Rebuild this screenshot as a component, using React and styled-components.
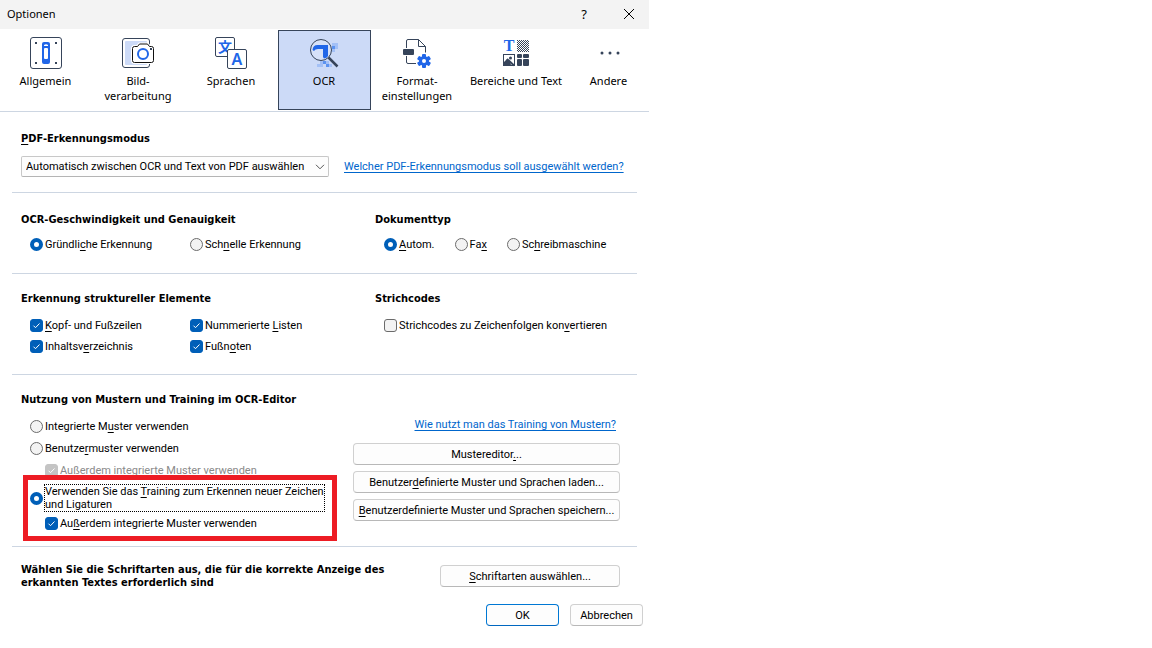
import React, { useState } from "react";
import styled, { createGlobalStyle } from "styled-components";

const GlobalStyle = createGlobalStyle`
  * {
    box-sizing: border-box;
  }

  body {
    margin: 0;
    background: #fff;
    color: #000;
    font-family: Roboto, sans-serif;
    font-size: 11px;
    line-height: 15px;
  }
`;

const Dialog = styled.main`
  width: 100%;
  max-width: 649px;
`;

const TitleBar = styled.header`
  display: flex;
  align-items: center;
  height: 29px;
  padding: 0 6px 2px 7px;
  background: #f3f3f3;
  font-family: "Noto Sans", sans-serif;

  h1 {
    flex: 1;
    margin: 0;
    font-size: 11px;
    font-weight: 400;
  }
`;

const TitleButton = styled.button`
  display: flex;
  align-items: center;
  justify-content: center;
  width: 28px;
  height: 26px;
  margin-left: 17px;
  padding: 0;
  border: 0;
  background: none;
  color: #000;
  font-family: inherit;
  font-size: 13px;
`;

const Toolbar = styled.nav`
  display: grid;
  grid-template-columns: 92px repeat(4, 93px) 105px 1fr;
  padding: 1px 0;
  border-bottom: 1px solid #cdd6e2;
`;

const Tab = styled.button`
  display: flex;
  flex-direction: column;
  align-items: center;
  gap: 4px;
  height: 80px;
  padding: 6px 1px 0 0;
  border: 1px solid ${(props) => (props.$active ? "#36445a" : "transparent")};
  background: ${(props) => (props.$active ? "#ccdaf7" : "none")};
  color: #000;
  font-family: "Noto Sans", sans-serif;
  font-size: 11px;
  line-height: 15px;
  white-space: pre-line;
`;

const Section = styled.section`
  display: grid;
  grid-template-columns: ${(props) => props.$columns || "354px 1fr"};
  align-items: ${(props) => (props.$last ? "center" : "start")};
  margin: 0 12px;
  padding: ${(props) => props.$pad};
  border-bottom: ${(props) => (props.$last ? "0" : "1px solid #cdd6e2")};
`;

const Heading = styled.h2`
  margin: 0 0 ${(props) => props.$gap || "10px"};
  font-family: "DejaVu Sans Condensed", "DejaVu Sans", sans-serif;
  font-size: 11px;
  font-weight: 700;
  line-height: ${(props) => props.$line || "14px"};
`;

const Options = styled.div`
  display: grid;
  grid-template-columns: 160px 1fr;
  gap: 6px 0;
  padding-left: 9px;
`;

const OptionRow = styled.div`
  display: flex;
  gap: 20px;
  padding-left: 9px;
`;

const OptionLabel = styled.label`
  display: flex;
  align-items: center;
  gap: 2px;
  color: ${(props) => (props.$disabled ? "#8a8a8a" : "#000")};
  white-space: nowrap;
`;

const RadioInput = styled.input`
  appearance: none;
  flex: none;
  width: 13px;
  height: 13px;
  margin: 0;
  border: 1px solid #6b6b6b;
  border-radius: 50%;
  background: #f3f3f3;

  &:checked {
    border: 4px solid #005fb8;
    background: #fff;
  }
`;

const CheckBox = styled.span`
  display: grid;
  flex: none;
  width: 13px;
  height: 13px;

  input,
  svg {
    grid-area: 1 / 1;
  }

  input {
    appearance: none;
    width: 13px;
    height: 13px;
    margin: 0;
    border: 1px solid #6b6b6b;
    border-radius: 3px;
    background: #f3f3f3;
  }

  input:checked {
    border-color: #005fb8;
    background: #005fb8;
  }

  input:disabled {
    border-color: #c4c4c4;
    background: #c4c4c4;
  }

  svg {
    pointer-events: none;
  }
`;

const SelectBox = styled.div`
  display: grid;
  align-items: center;
  width: 308px;

  select,
  svg {
    grid-area: 1 / 1;
  }

  select {
    appearance: none;
    width: 100%;
    height: 21px;
    padding: 0 20px 0 4px;
    border: 1px solid #c8c8c8;
    border-bottom-color: #b4b4b4;
    border-radius: 2px;
    background: #fdfdfd;
    color: #000;
    font: inherit;
  }

  svg {
    justify-self: end;
    margin-right: 4px;
    pointer-events: none;
  }
`;

const ModeRow = styled.div`
  display: flex;
  align-items: center;
  gap: 15px;
`;

const Link = styled.a`
  color: #0066cc;
  text-decoration: underline;
  text-underline-offset: 2px;
  white-space: nowrap;
`;

const Button = styled.button`
  width: ${(props) => props.$width || "100%"};
  height: 22px;
  padding: 0;
  border: 1px solid ${(props) => (props.$primary ? "#0078d4" : "#d0d0d0")};
  border-bottom-color: ${(props) => (props.$primary ? "#0067c0" : "#b8b8b8")};
  border-radius: 4px;
  background: #fdfdfd;
  color: #000;
  font: inherit;
  white-space: nowrap;
`;

const Patterns = styled.div`
  display: flex;
  flex-direction: column;
  gap: 7px;
  padding-left: 9px;
`;

const Nested = styled.div`
  padding-left: 15px;
`;

const Training = styled.div`
  position: relative;
  display: flex;
  flex-direction: column;
  gap: 5px;
`;

const TrainingLabel = styled(OptionLabel)`
  line-height: 13px;

  span {
    min-width: 278px;
    outline: 1px dotted #000;
  }
`;

/* marker frame laid over the training options */
const Marker = styled.div`
  position: absolute;
  top: -10px;
  right: -5px;
  bottom: -10px;
  left: -7px;
  border: 5px solid #ed1c24;
  pointer-events: none;
`;

const PatternActions = styled.div`
  display: flex;
  flex-direction: column;
  align-items: flex-end;
  gap: 6px;
  padding: 24px 17px 0 0;

  a {
    margin: 0 4px 5px 0;
  }
`;

const Footer = styled.footer`
  display: flex;
  justify-content: flex-end;
  gap: 11px;
  padding: 15px 6px 0 0;
`;

const Key = styled.u`
  text-underline-offset: 2px;
`;

const Check = () => (
  <svg width="13" height="13" viewBox="0 0 13 13" fill="none" stroke="#fff" aria-hidden="true">
    <path d="M3.5 6.7l2 2 4-4.2" />
  </svg>
);

const Checkbox = ({ children, initial = true, disabled }) => {
  const [checked, setChecked] = useState(initial);
  return (
    <OptionLabel $disabled={disabled}>
      <CheckBox>
        <input
          type="checkbox"
          checked={checked}
          disabled={disabled}
          onChange={() => setChecked(!checked)}
        />
        {checked && <Check />}
      </CheckBox>
      <span>{children}</span>
    </OptionLabel>
  );
};

const Radio = ({ children, name, initial, as: Label = OptionLabel }) => (
  <Label>
    <RadioInput type="radio" name={name} defaultChecked={initial} />
    <span>{children}</span>
  </Label>
);

const Icon = ({ children }) => (
  <svg width="32" height="32" viewBox="0 0 32 32" fill="none" aria-hidden="true">
    {children}
  </svg>
);

const DARK = "#36445a";
const BLUE = "#2066e8";

const GeneralIcon = () => (
  <Icon>
    <rect x="0.5" y="0.5" width="31" height="31" rx="2.5" stroke={DARK} />
    <g fill={DARK}>
      <rect x="5" y="5" width="2" height="2" />
      <rect x="25" y="5" width="2" height="2" />
      <rect x="5" y="25" width="2" height="2" />
      <rect x="25" y="25" width="2" height="2" />
    </g>
    <rect x="12" y="5" width="8" height="22" rx="2" fill={BLUE} />
    <path d="M14 8q2-1.5 4 0v1h-4z" fill="#fff" />
    <rect x="14" y="11" width="4" height="11" rx="1" fill="#fff" />
  </Icon>
);

const ImageIcon = () => (
  <Icon>
    <rect x="0.5" y="1.5" width="27" height="29" rx="2.5" stroke={DARK} />
    <rect x="3" y="4" width="22" height="24" rx="1" fill="#ccdaf7" />
    <path
      d="M12.5 9.5h3l2-2.5h8l2 2.5h2q2 0 2 2v12q0 2-2 2h-17q-2 0-2-2v-12q0-2 2-2z"
      fill="#fff"
      stroke="#fff"
      strokeWidth="3"
    />
    <path
      d="M12.5 9.5h3l2-2.5h8l2 2.5h2q2 0 2 2v12q0 2-2 2h-17q-2 0-2-2v-12q0-2 2-2z"
      fill="#fff"
      stroke="#111"
    />
    <circle cx="21" cy="17" r="5" stroke={BLUE} strokeWidth="2" />
    <rect x="28" y="11" width="2" height="2" fill={DARK} />
  </Icon>
);

const LanguageIcon = () => (
  <Icon>
    <rect x="0.5" y="0.5" width="19" height="19" rx="1.5" stroke={DARK} />
    <text
      x="10"
      y="15"
      textAnchor="middle"
      fontFamily="'Noto Sans CJK JP', sans-serif"
      fontSize="14"
      fontWeight="700"
      fill={BLUE}
    >
      文
    </text>
    <rect x="12.5" y="12.5" width="19" height="19" rx="1.5" fill="#fff" stroke={DARK} />
    <text
      x="22"
      y="28"
      textAnchor="middle"
      fontFamily="'Noto Sans', sans-serif"
      fontSize="16"
      fontWeight="600"
      fill={BLUE}
    >
      A
    </text>
  </Icon>
);

const OcrIcon = () => (
  <Icon>
    <g fill="#5c93f0">
      <rect x="24" y="9" width="3" height="3" />
      <rect x="15" y="24" width="3" height="3" />
      <rect x="18" y="27" width="3" height="3" />
    </g>
    <g fill="#a3c0f6">
      <rect x="24" y="6" width="6" height="3" />
      <rect x="27" y="9" width="3" height="3" />
      <rect x="24" y="12" width="3" height="3" />
      <rect x="12" y="24" width="3" height="3" />
      <rect x="9" y="27" width="6" height="3" />
      <rect x="18" y="24" width="3" height="3" />
      <rect x="21" y="27" width="3" height="3" />
    </g>
    <circle cx="13" cy="13" r="10.5" fill="#d6e1f8" />
    <path d="M4.5 13q.5-5 5-5H20v11q-1 2-4 2.5-1.500-.5-1-3.500v-6h-5q-3 0-4 2z" fill={BLUE} />
    <circle cx="13" cy="13" r="10.500" stroke={DARK} />
    <path d="M20.500 20.500l9 9" stroke={DARK} strokeWidth="2.500" />
  </Icon>
);

const FormatIcon = () => (
  <Icon>
    <path d="M5.500 11V4q0-1.500 1.500-1.500h10.500l7 7v6M5.500 19v6q0 1.500 1.500 1.500h8" stroke={DARK} />
    <path d="M17.500 2.500v7h7" stroke={DARK} />
    <rect x="2" y="12" width="11" height="6" rx="1" fill={DARK} />
    <g transform="translate(23 24)">
      <g fill={BLUE}>
        <rect x="-2" y="-7" width="4" height="14" rx="1" />
        <rect x="-2" y="-7" width="4" height="14" rx="1" transform="rotate(60)" />
        <rect x="-2" y="-7" width="4" height="14" rx="1" transform="rotate(120)" />
        <circle r="5" />
      </g>
      <circle r="2" fill="#fff" />
    </g>
  </Icon>
);

const AreasIcon = () => (
  <Icon>
    <defs>
      <pattern id="checker" width="2" height="2" patternUnits="userSpaceOnUse">
        <rect width="1" height="1" fill={DARK} />
        <rect x="1" y="1" width="1" height="1" fill={DARK} />
      </pattern>
    </defs>
    <text
      x="9"
      y="14"
      textAnchor="middle"
      fontFamily="'Liberation Serif', serif"
      fontSize="16"
      fontWeight="700"
      fill={BLUE}
    >
      T
    </text>
    <rect x="17" y="3" width="12" height="12" fill="url(#checker)" />
    <rect x="3.5" y="17.5" width="11" height="11" stroke={DARK} />
    <path d="M4 28v-3l3-3 3 3 1 3z" fill={DARK} />
    <path d="M7 22l7 6.5" stroke={DARK} strokeWidth="2" />
    <circle cx="10.5" cy="21" r="1.5" fill={DARK} />
    <g fill={DARK}>
      <rect x="17" y="17" width="5" height="4" rx="1" />
      <rect x="23" y="17" width="6" height="4" rx="1" />
      <rect x="17" y="22" width="5" height="7" rx="1" />
      <rect x="23" y="22" width="6" height="7" rx="1" />
    </g>
  </Icon>
);

const MoreIcon = () => (
  <Icon>
    <g fill={DARK}>
      <circle cx="9" cy="16" r="1.5" />
      <circle cx="17" cy="16" r="1.5" />
      <circle cx="25" cy="16" r="1.5" />
    </g>
  </Icon>
);

const tabs = [
  { label: "Allgemein", icon: GeneralIcon },
  { label: "Bild-\nverarbeitung", icon: ImageIcon },
  { label: "Sprachen", icon: LanguageIcon },
  { label: "OCR", icon: OcrIcon },
  { label: "Format-\neinstellungen", icon: FormatIcon },
  { label: "Bereiche und Text", icon: AreasIcon },
  { label: "Andere", icon: MoreIcon },
];

const App = () => {
  const [active, setActive] = useState("OCR");

  return (
    <>
      <GlobalStyle />
      <Dialog>
        <TitleBar>
          <h1>Optionen</h1>
          <TitleButton aria-label="Hilfe">?</TitleButton>
          <TitleButton aria-label="Schließen">
            <svg width="12" height="12" viewBox="0 0 12 12" stroke="#000" aria-hidden="true">
              <path d="M1 1l10 10M11 1L1 11" />
            </svg>
          </TitleButton>
        </TitleBar>

        <Toolbar>
          {tabs.map(({ label, icon: TabIcon }) => (
            <Tab key={label} $active={active === label} onClick={() => setActive(label)}>
              <TabIcon />
              <span>{label}</span>
            </Tab>
          ))}
        </Toolbar>

        <Section $columns="1fr" $pad="20px 9px 15px">
          <Heading>
            <label htmlFor="mode">
              <Key>P</Key>DF-Erkennungsmodus
            </label>
          </Heading>
          <ModeRow>
            <SelectBox>
              <select id="mode">
                <option>Automatisch zwischen OCR und Text von PDF auswählen</option>
              </select>
              <svg width="10" height="6" viewBox="0 0 10 6" fill="none" stroke="#555" aria-hidden="true">
                <path d="M1 .8l4 4 4-4" />
              </svg>
            </SelectBox>
            <Link href="#mode">Welcher PDF-Erkennungsmodus soll ausgewählt werden?</Link>
          </ModeRow>
        </Section>

        <Section $pad="20px 9px 21px">
          <div>
            <Heading>OCR-Geschwindigkeit und Genauigkeit</Heading>
            <Options>
              <Radio name="speed" initial>
                Gründli<Key>c</Key>he Erkennung
              </Radio>
              <Radio name="speed">
                Sch<Key>n</Key>elle Erkennung
              </Radio>
            </Options>
          </div>
          <div>
            <Heading>Dokumenttyp</Heading>
            <OptionRow>
              <Radio name="type" initial>
                <Key>A</Key>utom.
              </Radio>
              <Radio name="type">
                Fa<Key>x</Key>
              </Radio>
              <Radio name="type">
                Sc<Key>h</Key>reibmaschine
              </Radio>
            </OptionRow>
          </div>
        </Section>

        <Section $pad="18px 9px 20px">
          <div>
            <Heading $gap="12px">Erkennung struktureller Elemente</Heading>
            <Options>
              <Checkbox>
                <Key>K</Key>opf- und Fußzeilen
              </Checkbox>
              <Checkbox>
                Nummerierte <Key>L</Key>isten
              </Checkbox>
              <Checkbox>
                Inhaltsv<Key>e</Key>rzeichnis
              </Checkbox>
              <Checkbox>
                Fußn<Key>o</Key>ten
              </Checkbox>
            </Options>
          </div>
          <div>
            <Heading $gap="12px">Strichcodes</Heading>
            <OptionRow>
              <Checkbox initial={false}>
                Strichcodes zu Zeichenfolgen kon<Key>v</Key>ertieren
              </Checkbox>
            </OptionRow>
          </div>
        </Section>

        <Section $columns="311px 1fr" $pad="18px 0 15px 9px">
          <div>
            <Heading $gap="12px">Nutzung von Mustern und Training im OCR-Editor</Heading>
            <Patterns>
              <Radio name="pattern">
                Integrierte M<Key>u</Key>ster verwenden
              </Radio>
              <Radio name="pattern">
                Benutze<Key>r</Key>muster verwenden
              </Radio>
              <Nested>
                <Checkbox disabled>Außerdem integrierte Muster verwenden</Checkbox>
              </Nested>
              <Training>
                <Radio name="pattern" initial as={TrainingLabel}>
                  Verwenden Sie das <Key>T</Key>raining zum Erkennen neuer Zeichen
                  <br />
                  und Ligaturen
                </Radio>
                <Nested>
                  <Checkbox>
                    Au<Key>ß</Key>erdem integrierte Muster verwenden
                  </Checkbox>
                </Nested>
                <Marker />
              </Training>
            </Patterns>
          </div>
          <PatternActions>
            <Link href="#training">Wie nutzt man das Training von Mustern?</Link>
            <Button $width="267px">
              Mustereditor<Key>.</Key>..
            </Button>
            <Button $width="267px">
              Benutzer<Key>d</Key>efinierte Muster und Sprachen laden...
            </Button>
            <Button $width="267px">
              <Key>B</Key>enutzerdefinierte Muster und Sprachen speichern...
            </Button>
          </PatternActions>
        </Section>

        <Section $last $columns="1fr 180px" $pad="16px 17px 0 9px">
          <Heading $gap="0" $line="13px">
            Wählen Sie die Schriftarten aus, die für die korrekte Anzeige des
            <br />
            erkannten Textes erforderlich sind
          </Heading>
          <Button>
            <Key>S</Key>chriftarten auswählen...
          </Button>
        </Section>

        <Footer>
          <Button $primary $width="73px">
            OK
          </Button>
          <Button $width="73px">Abbrechen</Button>
        </Footer>
      </Dialog>
    </>
  );
};

export default App;
